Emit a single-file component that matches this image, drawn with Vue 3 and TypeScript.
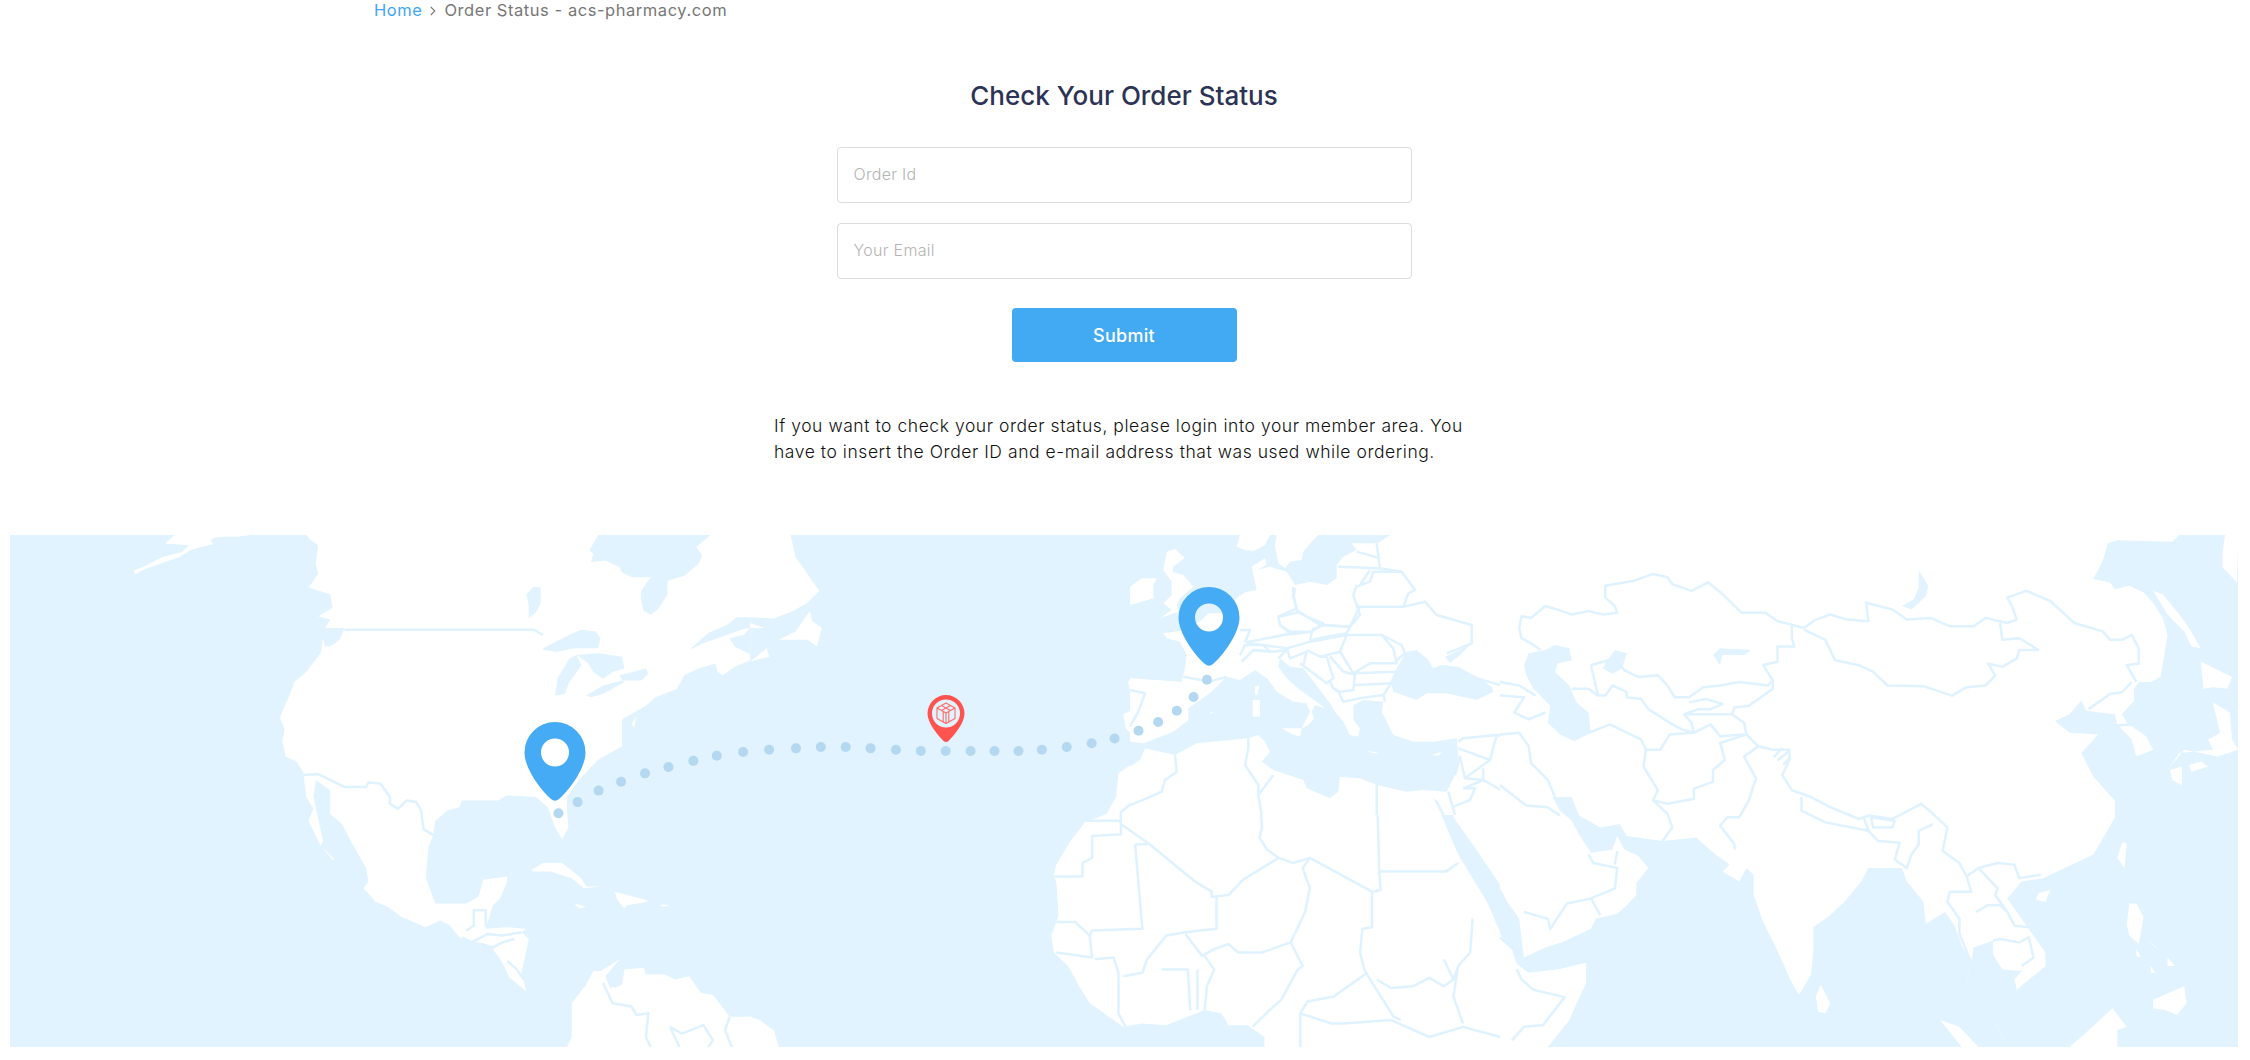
<script setup lang="ts">
type Pt = [number, number]
interface Zone { x0: number; land: string[]; water: string[]; isles: string[]; lines: string[] }

const sx = 0.4785
const sy = 0.338

const zones: Zone[] = [
  {
    x0: 0,
    land: [
      '345,40 365,15 525,15 495,20 470,20 450,22 440,30 445,42 420,50 395,62 375,80 345,95 305,115 285,128 278,122 300,108 340,80 380,65 395,45',
      '640,15 1568,15 1568,385 1535,405 1510,430 1500,420 1495,395 1460,410 1430,430 1415,470 1370,495 1350,520 1300,560 1300,640 1250,680 1210,740 1185,790 1185,830 1188,880 1175,915 1160,880 1145,820 1120,790 1060,785 1040,800 965,800 960,820 935,830 910,860 905,905 895,940 890,1030 910,1105 975,1105 1000,1085 1010,1035 1060,1025 1060,1040 1045,1090 1030,1110 1015,1180 1060,1175 1100,1180 1090,1190 1105,1210 1090,1310 1100,1365 1130,1390 1145,1400 1150,1370 1185,1385 1195,1400 1225,1345 1240,1305 1255,1305 1295,1270 1265,1320 1275,1355 1300,1345 1305,1300 1345,1295 1350,1315 1390,1315 1410,1330 1440,1320 1465,1370 1490,1375 1525,1440 1568,1440 1568,1530 1185,1530 1195,1500 1195,1400 1185,1385 1150,1370 1145,1400 1130,1390 1100,1365 1065,1325 1050,1280 1030,1240 1000,1220 965,1210 960,1205 940,1170 920,1155 890,1175 840,1145 810,1115 785,1100 760,1060 770,1040 765,1000 735,925 715,870 690,840 690,770 660,740 655,790 675,920 670,935 695,975 700,975 670,935 645,860 655,825 640,790 635,730 635,720 620,685 597,670 590,625 595,590 585,555 595,520 605,490 615,450 640,420 670,365 675,320 680,345 690,345 710,325 720,290 680,290 690,265 665,255 695,230 690,190 645,170 665,130 660,100 665,45 650,30'
    ],
    water: [
      '1250,15 1240,40 1232,60 1240,70 1235,95 1265,90 1295,110 1300,125 1320,140 1360,140 1340,180 1340,210 1345,240 1360,250 1375,235 1395,190 1395,150 1430,135 1460,100 1468,75 1455,50 1485,15',
      '1135,350 1190,310 1215,295 1245,300 1255,320 1250,350 1200,350 1165,360 1135,355',
      '1160,490 1165,440 1190,380 1205,370 1215,400 1190,450 1180,485',
      '1205,370 1250,365 1300,375 1305,410 1280,420 1260,440 1240,420 1230,395',
      '1225,490 1260,460 1300,445 1305,450 1260,485 1235,495',
      '1295,430 1350,410 1355,425 1340,445 1300,445',
      '1100,190 1115,168 1130,170 1130,215 1120,245 1105,260 1105,225',
      '1568,258 1540,258 1520,280 1480,305 1440,355 1470,335 1555,292 1568,290',
      '1555,310 1525,320 1535,345 1568,368 1568,290',
      '1275,1320 1295,1320 1300,1345 1285,1355'
    ],
    isles: [
      '1110,1005 1135,985 1175,985 1215,1030 1225,1055 1260,1055 1220,1060 1195,1030 1150,1010 1115,1010',
      '1285,1070 1350,1095 1355,1100 1310,1110 1305,1120 1290,1095',
      '1200,1105 1225,1115 1210,1120',
      '1380,1108 1400,1110 1385,1115',
      '1320,575 1330,550 1325,585',
      '280,120 290,125 283,130'
    ],
    lines: [
      '720,295 1115,295 1135,310',
      '635,725 665,722 720,760 765,760 770,747 795,750 815,790 815,810 832,825 850,800 870,805 880,830 885,885 908,905',
      '975,1185 990,1170 990,1125 1015,1125 1015,1175',
      '965,1205 985,1220 1020,1195 1050,1200 1090,1190',
      '1005,1225 1030,1235 1050,1220 1075,1210',
      '1060,1275 1080,1300 1095,1330',
      '1260,1340 1280,1400 1320,1410 1330,1435 1355,1430 1350,1500 1360,1530',
      '1400,1470 1425,1490 1470,1465 1490,1510 1480,1530',
      '1400,1470 1410,1500 1420,1530',
      '1525,1440 1515,1480 1530,1530'
    ]
  },
  {
    x0: 750,
    land: [
      '0,15 85,15 95,80 130,150 145,180 120,215 90,240 50,262 0,258',
      '60,325 95,300 125,240 130,270 150,290 140,345 120,325 100,325',
      '0,275 30,290 0,290',
      '0,390 35,350 40,375 10,385',
      '0,1440 20,1450 50,1480 60,1530 0,1530',
      '1025,15 1568,15 1568,1530 1075,1530 1075,1500 1040,1465 1000,1465 985,1430 950,1420 905,1445 870,1465 820,1460 780,1470 740,1430 710,1400 690,1355 665,1290 635,1250 630,1200 645,1140 640,1040 635,1020 640,990 670,920 700,865 745,840 765,790 770,720 810,680 830,645 825,630 800,610 785,585 780,545 810,525 825,490 795,480 790,450 800,435 905,440 915,385 925,355 905,320 880,325 870,310 905,305 935,300 945,270 975,240 1000,205 1020,190 1060,178 1065,160 1050,130 1060,100 1075,70 1040,62 1025,50'
    ],
    water: [
      '1430,795 1450,860 1480,960 1540,1100 1568,1190 1568,1050 1515,940 1470,850 1470,800'
    ],
    isles: [],
    lines: [
      '890,665 895,730 855,745 850,775 800,805 775,835 775,900 715,905 715,970 695,985 695,1025 635,1025',
      '700,860 775,860',
      '775,870 835,930 930,1040 965,1070 965,1085 1000,1080 1030,1035 1105,970 1135,985 1170,970 1300,1070',
      '1040,620 1040,690 1060,740 1065,790 1070,880 1065,910 1080,945 1105,970',
      '1310,750 1315,1010 1318,1065 1300,1070 1300,1175 1280,1180 1275,1250 1285,1305',
      '1315,1010 1455,1010 1480,985',
      '805,930 830,930',
      '805,930 815,1100 820,1180 715,1185 710,1200 715,1265 640,1250',
      '640,1160 680,1160 710,1200',
      '975,1085 975,1180 910,1190 870,1200 830,1270 820,1310 780,1320',
      '1170,970 1155,1000 1170,1060 1160,1130 1130,1220 1070,1250 1020,1250 1000,1225 970,1240 945,1260 910,1195',
      '1130,1220 1155,1290 1145,1300 1110,1390 1090,1415 1050,1470',
      '860,1300 915,1300 920,1420',
      '935,1300 935,1420',
      '950,1420 955,1350 970,1300 950,1260',
      '720,1270 760,1265 770,1310 770,1370 770,1430 785,1470',
      '1510,1150 1505,1250 1480,1290 1470,1330 1450,1270',
      '1310,1330 1340,1355 1385,1350 1420,1325 1450,1350 1470,1330',
      '1285,1305 1345,1440 1360,1450',
      '1150,1530 1150,1430 1165,1395 1220,1380 1290,1310',
      '1150,1430 1215,1460 1240,1460 1340,1450 1420,1500 1490,1470 1568,1500',
      '1480,1290 1470,1380 1490,1460'
    ]
  },
  {
    x0: 1500,
    land: ['0,15 1543,15 1543,1530 0,1530'],
    water: [
      '1420,15 1405,35 1290,30 1270,40 1260,90 1240,145 1275,155 1285,175 1315,165 1345,185 1365,215 1385,260 1395,310 1385,400 1380,435 1360,450 1335,450 1325,470 1325,505 1300,545 1310,570 1350,610 1365,650 1330,670 1320,620 1290,575 1285,545 1225,535 1215,505 1190,545 1160,565 1190,600 1250,605 1215,660 1240,730 1285,800 1285,850 1265,900 1240,960 1180,1000 1135,1030 1090,1040 1060,1090 1110,1190 1140,1250 1140,1290 1080,1360 1075,1330 1090,1305 1050,1300 1030,1255 1030,1215 990,1235 985,1280 970,1370 1000,1410 1040,1470 1060,1530 1543,1530 1543,15',
      '100,1530 145,1450 160,1400 180,1340 180,1280 120,1300 60,1310 35,1285 50,1265 95,1235 130,1220 190,1180 200,1150 245,1135 265,1110 285,1080 285,1045 310,1000 290,965 260,945 245,905 235,945 190,955 165,900 150,860 125,830 110,790 150,790 165,845 210,880 250,870 265,905 340,920 410,910 430,935 450,960 480,990 465,1010 500,1040 515,1000 530,1020 530,1080 550,1160 575,1230 610,1340 625,1375 650,1315 655,1240 655,1175 690,1140 720,1100 755,1040 770,1000 840,1000 850,1040 885,1100 890,1165 930,1130 950,1170 965,1230 985,1280 970,1370 1000,1410 1040,1470 1060,1530',
      '0,1060 15,1100 40,1150 50,1265 35,1285 25,1240 0,1195',
      '50,400 60,365 95,355 115,340 145,350 150,385 120,395 115,420 145,460 160,510 185,540 190,600 155,625 125,605 100,570 105,520 70,470 55,430',
      '220,395 240,355 265,365 255,410 235,425 215,410',
      '445,370 460,350 525,355 510,370 465,370 460,400',
      '875,120 895,165 890,195 860,235 840,225 865,205 875,170'
    ],
    isles: [
      '1515,15 1510,70 1510,110 1540,155 1543,15',
      '1365,180 1385,190 1420,250 1440,290 1465,350 1445,345 1430,300 1395,250',
      '1465,390 1530,435 1520,470 1490,465 1470,470',
      '1490,510 1525,540 1530,620 1543,650 1500,670 1430,650 1395,710 1420,660 1490,650 1480,620 1505,600',
      '1400,710 1425,700 1425,755 1405,740',
      '1440,695 1465,685 1480,700 1445,715',
      '1300,925 1310,925 1305,1000 1290,970',
      '1125,1075 1150,1065 1140,1100 1120,1095',
      '1315,1105 1330,1105 1345,1145 1335,1225 1315,1200 1310,1170',
      '1365,1390 1430,1350 1435,1400 1415,1435 1390,1420 1365,1415',
      '1330,1240 1340,1265 1330,1260',
      '1360,1290 1370,1310 1360,1310',
      '1395,1265 1410,1290 1395,1290',
      '1355,1215 1380,1245 1365,1230',
      '1190,1530 1230,1480 1280,1415 1310,1470 1290,1480 1290,1530',
      '670,1345 690,1400 680,1430 665,1425 660,1380',
      '920,1450 960,1470 1000,1530 965,1530'
    ],
    lines: [
      '40,290 45,255 65,260 95,225 130,240 150,250 185,240 215,250 245,245 240,225 220,200 220,165 280,150 320,130 350,140 360,160 400,180 435,155 465,190 505,245 525,245 555,245 580,270 610,280 635,290',
      '40,290 45,320 70,340 85,355',
      '635,290 660,265 690,250 725,265 770,270 765,215 820,235 850,265 900,260 940,285 990,285 1015,260 1060,275 1080,265 1070,225 1060,200 1100,180 1150,210 1200,275 1260,300 1275,325 1300,325 1320,310 1335,350 1335,395 1310,400 1330,450',
      '635,295 680,325 700,385 750,400 780,420 810,460 885,462 945,490 975,465 1015,460 1035,430 1020,395 1050,405 1080,380 1085,355 1125,355 1085,320 1050,325 1045,275',
      '610,280 610,320 615,345 580,345 580,390 550,400 570,445 570,470 540,500 520,520 490,525 485,545 510,570 515,605 540,640 570,650 605,650 605,680 590,725 610,770 650,790 690,820 750,855 770,845 820,855 880,810 905,840 935,880 925,950 960,985 975,1025 1000,1000 1040,985 1075,990 1085,1030 1130,1020',
      '190,400 205,490 220,490 235,460 265,480 265,495 295,500 310,530 360,575 380,590 405,600 400,570 385,545',
      '190,400 240,380 260,415 290,435 330,430 350,460 365,495 395,495 425,465 460,460 500,450 560,460 570,445',
      '395,510 430,500 465,515 440,530 415,530 385,545 420,545 485,545',
      '405,600 440,575 460,610 510,605',
      '150,470 185,470 205,490',
      '185,600 230,575 295,620 305,650 335,650 355,605 405,600',
      '305,650 300,700 330,770 320,800 350,810 405,795 405,765 445,745 445,710 470,680 460,630 515,605',
      '320,800 350,840 360,880 340,920',
      '540,640 510,670 535,735 520,800 500,850 475,850 460,875 490,930 490,945',
      '630,790 630,830 680,865 770,890 760,850',
      '775,850 825,860 820,880 780,880 775,850',
      '770,890 790,920 835,925 825,975 850,1000 860,960 875,930 875,890 905,870',
      '975,1025 985,1070 940,1070 935,1100 960,1150 960,1195 985,1280',
      '1000,1000 1040,1060 1035,1080 1060,1130 1075,1170 1105,1175',
      '995,1130 1020,1110 1045,1110 1060,1130',
      '1030,1215 1045,1210 1085,1220 1105,1205 1115,1265 1090,1290',
      '1230,530 1275,485 1300,480 1320,450',
      '1280,580 1320,575',
      '0,605 40,600 60,640 65,690 100,740 115,790',
      '0,450 40,460 75,490',
      '0,490 50,495 30,540 60,560 95,540',
      '0,755 55,815 100,820 125,845',
      '50,1130 100,1150 105,1180 140,1105 190,1090 240,1060 245,1000 195,985 185,960',
      '190,1090 210,1140',
      '240,990 245,950',
      '35,1300 45,1330 70,1360 135,1382 90,1465 50,1470 25,1510',
      '0,1205 40,1255',
      '572,672 590,645',
      '580,682 603,655',
      '592,695 605,675'
    ]
  }
]

/* Europe and the Mediterranean, traced at a finer scale (1 unit = 1/3 px). */
const europe: Omit<Zone, 'x0'> = {
  land: ['0,0 1110,0 1110,840 0,840'],
  water: [
    '0,0 330,0 320,35 345,45 370,48 405,30 420,0 440,0 435,30 440,60 445,85 465,100 480,80 515,75 520,50 545,20 565,0 780,0 750,20 740,25 665,25 680,45 640,65 620,90 620,130 590,150 540,140 495,150 470,110 420,95 380,105 365,95 380,165 345,172 320,190 280,235 235,235 215,255 170,285 100,295 110,310 150,320 170,360 165,400 155,440 0,430',
    '40,625 130,590 175,555 175,520 245,470 290,425 330,435 375,405 410,430 450,370 480,395 520,400 600,505 615,530 640,560 660,600 685,605 690,580 670,555 670,510 700,495 760,500 755,530 790,600 850,620 910,620 980,610 985,660 975,720 950,770 880,765 830,770 740,750 690,730 630,725 625,770 600,790 530,760 520,735 430,705 395,680 420,650 405,620 385,600 355,610 200,625 135,660 45,640',
    '785,450 800,400 830,350 860,345 895,375 910,400 935,390 985,395 1040,425 1085,455 1090,470 1040,495 950,475 890,475 860,495 790,470',
    '945,365 1020,330 990,360 960,385',
    '0,620 40,625 45,640 30,675 0,695',
    '910,790 935,840 945,840 925,800'
  ],
  isles: [
    '365,95 405,70 410,90 380,105',
    '110,50 135,42 165,68 130,95 128,110 160,120 190,155 150,190 140,210 145,230 90,250 125,225 100,205 125,180 125,140 100,105',
    '0,155 35,130 80,130 70,150 70,190 20,205 0,210',
    '375,405 400,400 450,370 445,395 470,430 510,465 560,500 585,520 555,510 545,530 552,552 535,570 515,580 540,530 530,505 490,500 440,470 405,420',
    '455,580 515,580 510,605 480,595',
    '368,495 390,495 390,545 368,545',
    '375,455 388,452 382,480 375,478',
    '240,530 252,533 242,536',
    '705,645 750,655 730,655',
    '905,660 935,650 925,662',
    '895,372 915,368 935,385 910,400'
  ],
  lines: [
    '490,155 490,180 500,220 445,245 450,270 480,295 460,300 350,322',
    '495,160 490,185 500,225 530,245 570,270 660,275 690,240 670,180 680,150',
    '445,245 505,232 530,245 580,265 545,290 480,290 450,270',
    '460,300 545,290 540,320 470,340 400,330 350,325',
    '545,285 580,270 660,275 650,295 590,305 545,315',
    '540,320 650,300 630,350 570,365 530,345',
    '650,300 755,300 790,340 800,385 720,385 670,415 630,350',
    '755,300 815,330 825,355 795,380',
    '660,275 690,215 820,215 885,200 920,240 1025,270 1025,325 950,355',
    '680,215 690,215',
    '820,215 835,175 855,165 815,110 730,110 720,140 680,155',
    '625,95 750,100',
    '720,105 690,150',
    '740,25 750,100',
    '680,50 750,70',
    '750,100 815,110',
    '470,340 480,370 530,350',
    '510,385 590,445 610,430 590,365 570,365',
    '530,350 520,390',
    '600,365 640,410 675,420 670,465 630,470 610,460',
    '670,415 800,410 780,450 760,480 690,490 640,500 625,470 610,460 600,440',
    '675,450 790,445',
    '330,360 345,330 400,330 420,350 370,345 335,380',
    '370,345 430,350 470,345 445,370',
    '160,425 240,440 290,425',
    '0,465 45,475 25,530 0,575',
    '330,285 360,285 345,322',
    '1130,490 1155,540 1180,620 1100,600 1000,610 985,620',
    '1040,430 1110,450',
    '985,640 1080,675 1100,600',
    '1005,730 1080,675',
    '1060,700 1060,735 1190,810',
    '975,720 990,665 1005,730 1060,735',
    '1000,760 1035,760 1020,795 970,815',
    '955,770 975,840',
    '1060,735 1000,760',
    '740,750 740,840',
    '385,780 395,840',
    '355,610 355,640 345,690 385,750 385,780 430,720',
    '135,660 140,710 105,735 95,770 50,790 0,810',
    '760,480 765,500'
  ]
}

const zonePaths = zones.map((z) => ({
  ...z,
  transform: `translate(${z.x0} 530) scale(${sx} ${sy})`
}))

const z3: Pt[] = [[1167,838],[1207,805],[1251,771],[1298,745],[1348,720],[1397,701],[1449,683],[1498,668],[1553,657]]
const z4: Pt[] = [[40,650],[96,646],[148,642],[200,642],[252,646],[305,650],[357,654],[409,654],[461,654],[511,654],[561,654],[610,650],[662,642],[714,631],[762,617],[812,594],[853,568],[892,535],[927,494],[955,443]]
const dots = [
  ...z3.map(([x, y]) => ({ x: x * sx, y: 530 + y * sy })),
  ...z4.map(([x, y]) => ({ x: 750 + x * sx, y: 530 + y * sy }))
]
</script>

<template>
  <div class="page">
    <nav class="crumbs">
      <a class="home">Home</a>
      <svg class="chev" width="6" height="10" viewBox="0 0 6 10"><path d="M.8 1l4 4-4 4" fill="none" stroke="#777" stroke-width="1.100" /></svg>
      <span>Order Status - acs-pharmacy.com</span>
    </nav>

    <main class="panel">
      <h1>Check Your Order Status</h1>
      <form class="form" @submit.prevent>
        <input class="field" type="text" placeholder="Order Id" />
        <input class="field" type="email" placeholder="Your Email" />
        <button class="submit" type="submit">Submit</button>
      </form>
      <p class="note">If you want to check your order status, please login into your member area. You have to insert the Order ID and e-mail address that was used while ordering.</p>
    </main>

    <svg class="map" width="2228" height="512" viewBox="10 535 2228 512" role="img" aria-label="Shipping route from the United States to France">
      <defs>
        <clipPath id="europe-clip"><rect x="0" y="0" width="1110" height="840" /></clipPath>
      </defs>
      <rect x="10" y="535" width="2228" height="512" class="sea" />
      <g v-for="z in zonePaths" :key="z.x0" :transform="z.transform">
        <polygon v-for="(p, i) in z.land" :key="'l' + i" :points="p" class="land" />
        <polygon v-for="(p, i) in z.water" :key="'w' + i" :points="p" class="sea" />
        <polygon v-for="(p, i) in z.isles" :key="'s' + i" :points="p" class="land" />
        <polyline v-for="(p, i) in z.lines" :key="'b' + i" :points="p" class="border" />
      </g>
      <g transform="translate(1130 535) scale(.33333)" clip-path="url(#europe-clip)">
        <polygon v-for="(p, i) in europe.land" :key="'l' + i" :points="p" class="land" />
        <polygon v-for="(p, i) in europe.water" :key="'w' + i" :points="p" class="sea" />
        <polygon v-for="(p, i) in europe.isles" :key="'s' + i" :points="p" class="land" />
        <polyline v-for="(p, i) in europe.lines" :key="'b' + i" :points="p" class="border" />
      </g>
      <circle v-for="(d, i) in dots" :key="i" :cx="d.x" :cy="d.y" r="5" class="dot" />
      <g transform="translate(555 752.5)">
        <path class="pin" fill-rule="evenodd" d="M0-30.5A30.5 30.5 0 0 1 30.5 0C30.5 16 14 38 4 46.500Q0 50-4 46.500C-14 38-30.500 16-30.500 0A30.500 30.500 0 0 1 0-30.500ZM0-14A14 14 0 1 0 0 14A14 14 0 1 0 0-14Z" />
      </g>
      <g transform="translate(1209 617.5)">
        <path class="pin" fill-rule="evenodd" d="M0-30.5A30.5 30.5 0 0 1 30.5 0C30.5 16 14 38 4 46.500Q0 50-4 46.500C-14 38-30.500 16-30.500 0A30.500 30.500 0 0 1 0-30.500ZM0-14A14 14 0 1 0 0 14A14 14 0 1 0 0-14Z" />
      </g>
      <g transform="translate(946 713.500)">
        <path class="parcel" fill-rule="evenodd" d="M0-18.500A18.500 18.500 0 0 1 18.500 0C18.500 9 9 21 2.500 27.500Q0 29.500-2.500 27.500C-9 21-18.500 9-18.500 0A18.500 18.500 0 0 1 0-18.500ZM0-14A14 14 0 1 0 0 14A14 14 0 1 0 0-14Z" />
        <g class="box">
          <path d="M0-10.500L9-5.500V5L0 10L-9 5V-5.500Z" />
          <path d="M-9-5.500L0-.5L9-5.500M0-.5V10M-2.800-2V9M2.800-2V9M-4.500-8L4.500-3M4.500-8L-4.500-3" />
        </g>
      </g>
    </svg>
  </div>
</template>

<style scoped>
.page {
  width: 2250px;
  font-family: Inter, "Open Sans", sans-serif;
  color: #222;
}
.crumbs {
  display: flex;
  align-items: center;
  height: 20px;
  padding-left: 374px;
  font-size: 16.500px;
  color: #777;
  letter-spacing: 0.55px;
}
.home {
  color: #42a5f5;
}
.chev {
  margin: 1px 8px 0 8px;
}
.panel {
  display: flex;
  flex-direction: column;
  align-items: center;
  padding-right: 2px;
}
h1 {
  margin: 58px 0 0;
  height: 36px;
  font-size: 26px;
  line-height: 36px;
  font-weight: 500;
  color: #2c3354;
}
.form {
  margin-top: 33px;
  width: 575px;
  display: flex;
  flex-direction: column;
  align-items: center;
}
.field {
  box-sizing: border-box;
  width: 100%;
  height: 56px;
  margin-bottom: 20px;
  padding: 0 16px 2px;
  border: 1px solid #dcdcdc;
  border-radius: 4px;
  background: #fff;
  font: 300 16px Inter, sans-serif;
  letter-spacing: 0.3px;
  outline: none;
}
.field::placeholder {
  color: #b4b4b4;
  opacity: 1;
}
.submit {
  margin-top: 9px;
  width: 225px;
  height: 54px;
  border: 0;
  border-radius: 4px;
  background: #42a9f3;
  color: #fff;
  font: 500 18px Inter, sans-serif;
  letter-spacing: 0.3px;
}
.note {
  box-sizing: border-box;
  margin: 51px 0 0;
  width: 700px;
  font-size: 17.500px;
  font-weight: 300;
  line-height: 26px;
  color: #111;
  letter-spacing: 0.55px;
}
.map {
  display: block;
  margin: 70px 0 0 10px;
}
.sea {
  fill: #e0f3ff;
}
.land {
  fill: #fff;
}
.border {
  fill: none;
  stroke: #dff2ff;
  stroke-width: 2.500;
  vector-effect: non-scaling-stroke;
  stroke-linejoin: round;
}
.dot {
  fill: #b3d8ef;
}
.pin {
  fill: #45abf5;
}
.parcel {
  fill: #ff5350;
}
.box {
  fill: none;
  stroke: #ff6a68;
  stroke-width: 1.100;
  stroke-linejoin: round;
}
</style>
